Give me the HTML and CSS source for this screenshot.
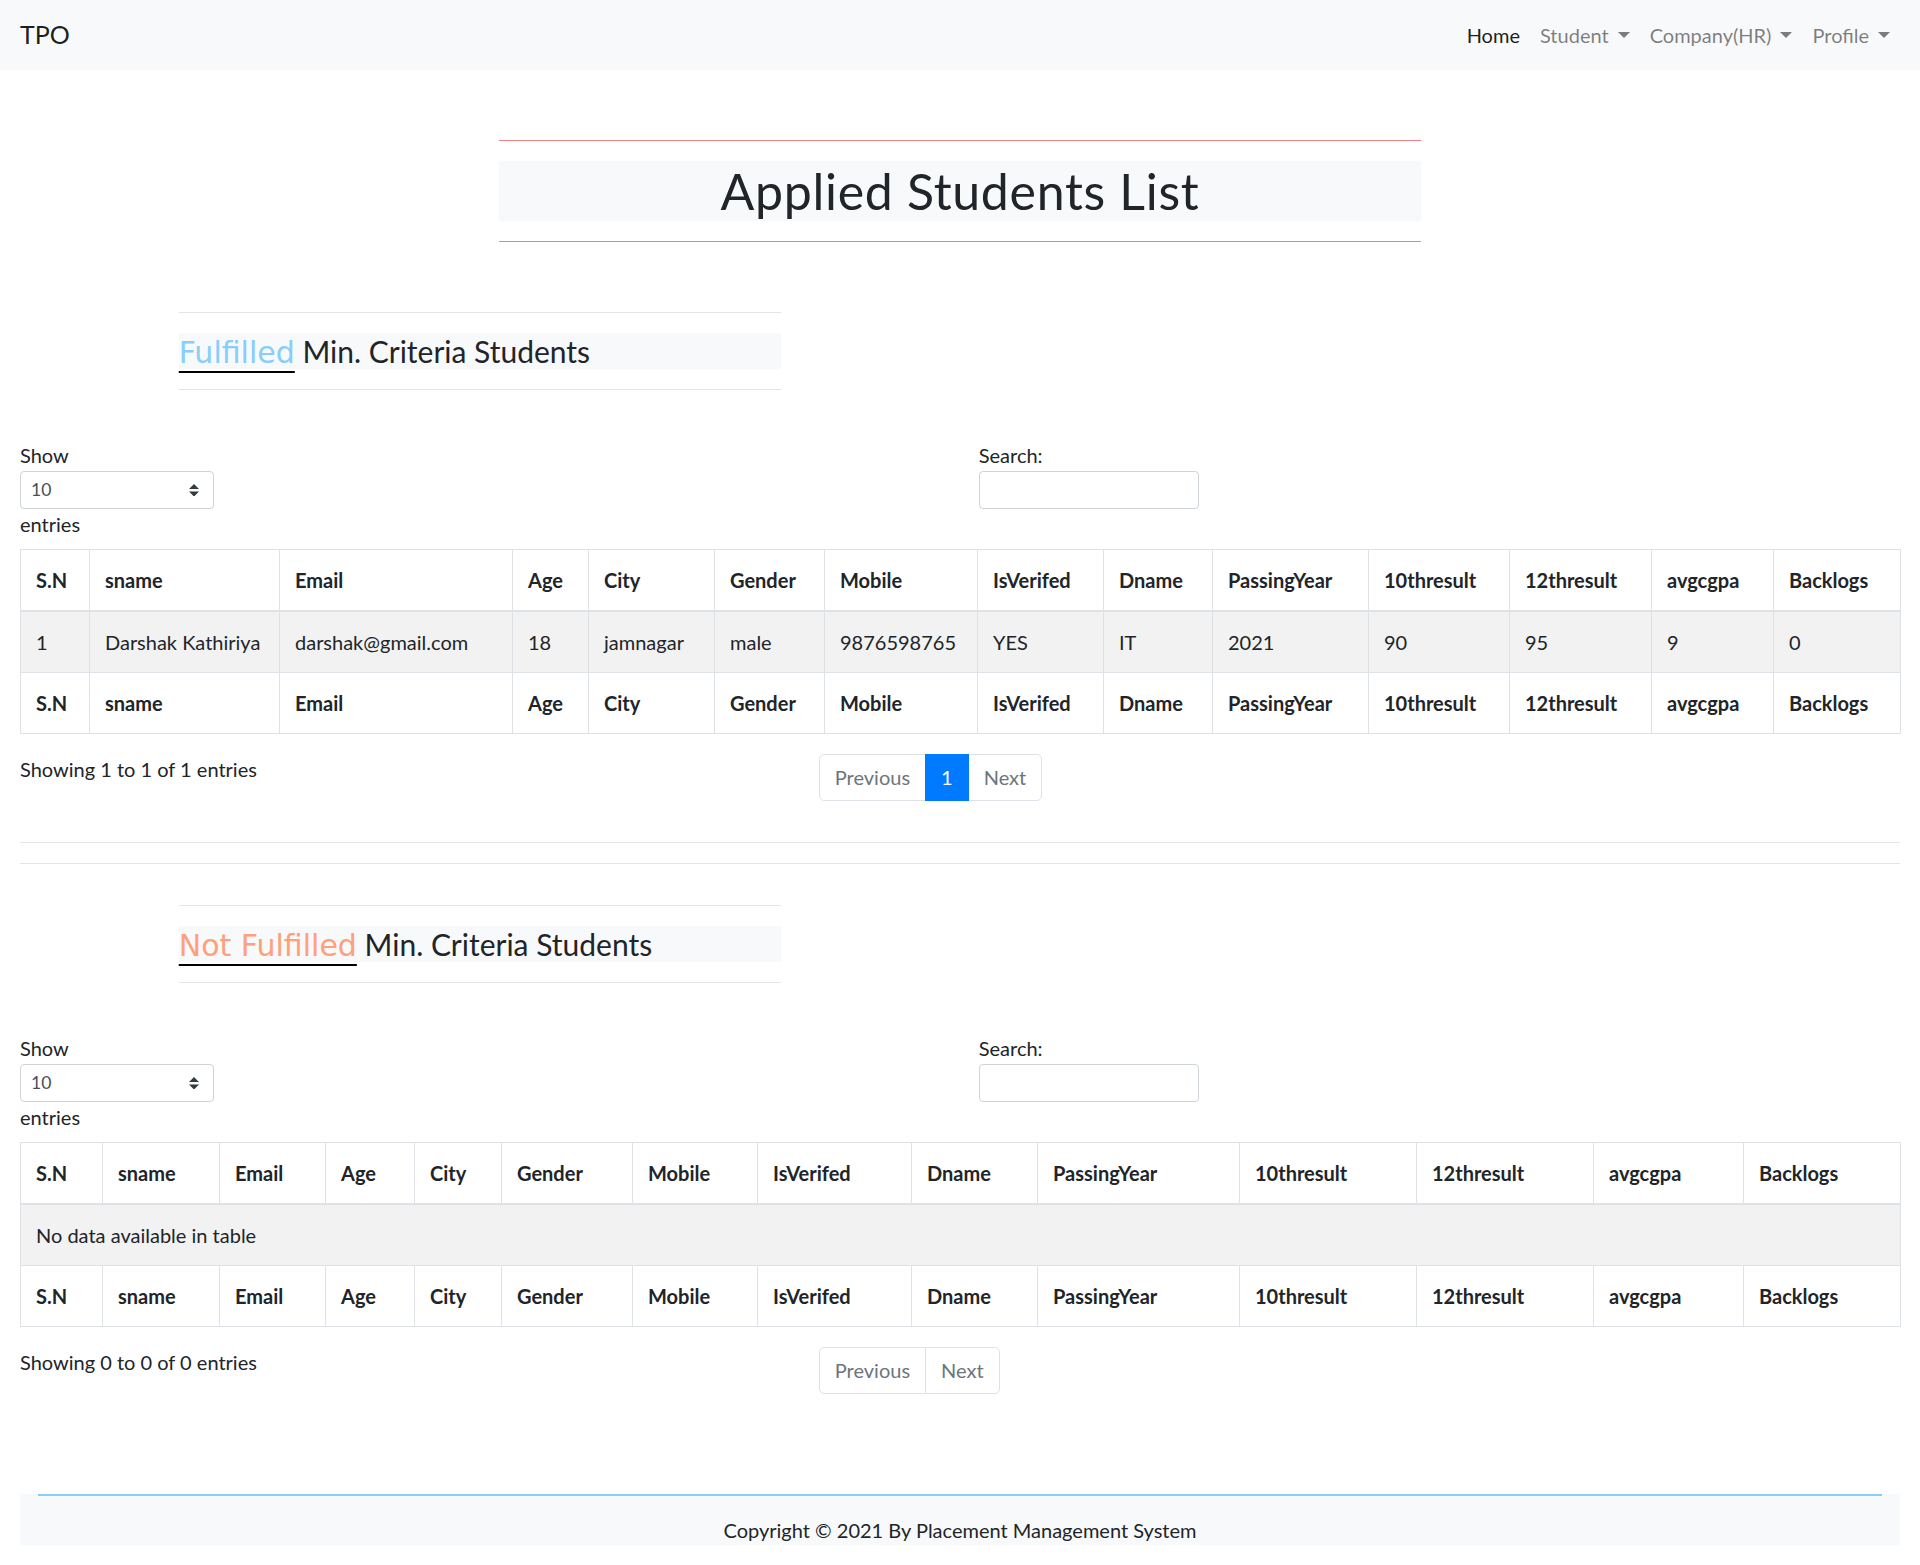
FILE: index.html
```html
<!DOCTYPE html>
<html lang="en">
<head>
<meta charset="utf-8">
<title>Applied Students List</title>
<link rel="stylesheet" href="styles.css">
</head>
<body>
<nav class="navbar">
  <a class="brand" href="#">TPO</a>
  <ul class="nav">
    <li><a class="nav-link active" href="#">Home</a></li>
    <li><a class="nav-link" href="#">Student<span class="caret"></span></a></li>
    <li><a class="nav-link" href="#">Company(HR)<span class="caret"></span></a></li>
    <li><a class="nav-link" href="#">Profile<span class="caret"></span></a></li>
  </ul>
</nav>

<main class="page">
  <section class="title-wrap">
    <hr class="rule-red">
    <h1 class="page-title">Applied Students List</h1>
    <hr class="rule-red rule-red-bottom">
  </section>

  <section class="sub-wrap">
    <hr class="rule">
    <h4 class="sub-title"><u class="crit"><span class="crit-ok">Fulfilled</span></u> Min. Criteria Students</h4>
    <hr class="rule">
  </section>

  <div class="dt-top">
    <div class="dt-length">
      <span class="dt-label">Show</span>
      <div class="select-box"><span>10</span>
        <svg class="sel-arrows" width="10" height="12.5" viewBox="0 0 4 5"><path fill="#343a40" d="M2 0L0 2h4zm0 5L0 3h4z"/></svg>
      </div>
      <span class="dt-label">entries</span>
    </div>
    <div class="dt-filter">
      <span class="dt-label">Search:</span>
      <div class="search-input"></div>
    </div>
  </div>

  <table class="dt-table tbl-a">
    <colgroup>
      <col><col><col><col><col><col><col><col><col><col><col><col><col><col>
    </colgroup>
    <thead>
      <tr><th>S.N</th><th>sname</th><th>Email</th><th>Age</th><th>City</th><th>Gender</th><th>Mobile</th><th>IsVerifed</th><th>Dname</th><th>PassingYear</th><th>10thresult</th><th>12thresult</th><th>avgcgpa</th><th>Backlogs</th></tr>
    </thead>
    <tbody>
      <tr><td>1</td><td>Darshak Kathiriya</td><td>darshak@gmail.com</td><td>18</td><td>jamnagar</td><td>male</td><td>9876598765</td><td>YES</td><td>IT</td><td>2021</td><td>90</td><td>95</td><td>9</td><td>0</td></tr>
    </tbody>
    <tfoot>
      <tr><th>S.N</th><th>sname</th><th>Email</th><th>Age</th><th>City</th><th>Gender</th><th>Mobile</th><th>IsVerifed</th><th>Dname</th><th>PassingYear</th><th>10thresult</th><th>12thresult</th><th>avgcgpa</th><th>Backlogs</th></tr>
    </tfoot>
  </table>

  <div class="dt-bottom">
    <div class="dt-info">Showing 1 to 1 of 1 entries</div>
    <ul class="pagination">
      <li class="page-item disabled"><a class="page-link" href="#">Previous</a></li>
      <li class="page-item active"><a class="page-link" href="#">1</a></li>
      <li class="page-item disabled"><a class="page-link" href="#">Next</a></li>
    </ul>
  </div>

  <hr class="rule rule-full">
  <hr class="rule rule-full">

  <section class="sub-wrap sub-wrap-second">
    <hr class="rule">
    <h4 class="sub-title"><u class="crit"><span class="crit-not">Not Fulfilled</span></u> Min. Criteria Students</h4>
    <hr class="rule">
  </section>

  <div class="dt-top">
    <div class="dt-length">
      <span class="dt-label">Show</span>
      <div class="select-box"><span>10</span>
        <svg class="sel-arrows" width="10" height="12.5" viewBox="0 0 4 5"><path fill="#343a40" d="M2 0L0 2h4zm0 5L0 3h4z"/></svg>
      </div>
      <span class="dt-label">entries</span>
    </div>
    <div class="dt-filter">
      <span class="dt-label">Search:</span>
      <div class="search-input"></div>
    </div>
  </div>

  <table class="dt-table tbl-b">
    <colgroup>
      <col><col><col><col><col><col><col><col><col><col><col><col><col><col>
    </colgroup>
    <thead>
      <tr><th>S.N</th><th>sname</th><th>Email</th><th>Age</th><th>City</th><th>Gender</th><th>Mobile</th><th>IsVerifed</th><th>Dname</th><th>PassingYear</th><th>10thresult</th><th>12thresult</th><th>avgcgpa</th><th>Backlogs</th></tr>
    </thead>
    <tbody>
      <tr><td class="empty" colspan="14">No data available in table</td></tr>
    </tbody>
    <tfoot>
      <tr><th>S.N</th><th>sname</th><th>Email</th><th>Age</th><th>City</th><th>Gender</th><th>Mobile</th><th>IsVerifed</th><th>Dname</th><th>PassingYear</th><th>10thresult</th><th>12thresult</th><th>avgcgpa</th><th>Backlogs</th></tr>
    </tfoot>
  </table>

  <div class="dt-bottom">
    <div class="dt-info">Showing 0 to 0 of 0 entries</div>
    <ul class="pagination">
      <li class="page-item disabled"><a class="page-link" href="#">Previous</a></li>
      <li class="page-item disabled"><a class="page-link" href="#">Next</a></li>
    </ul>
  </div>

  <footer class="footer">
    <hr class="footer-rule">
    <p class="copyright">Copyright © 2021 By Placement Management System</p>
  </footer>
</main>
</body>
</html>
```
FILE: styles.css
```css
* { box-sizing: border-box; }
html, body { margin: 0; padding: 0; }
body {
  font-family: Lato, "Open Sans", sans-serif;
  font-size: 20px;
  line-height: 30px;
  color: #212529;
  background: #fff;
}

/* navbar */
.navbar {
  height: 70px;
  background: #f8f9fa;
  display: flex;
  align-items: center;
  justify-content: space-between;
  padding: 0 20px;
}
.brand {
  font-size: 25px;
  line-height: 37.5px;
  color: rgba(0,0,0,.9);
  text-decoration: none;
}
.nav { display: flex; list-style: none; margin: 0; padding: 0; }
.nav-link {
  display: block;
  padding: 10px;
  color: rgba(0,0,0,.5);
  text-decoration: none;
}
.nav-link.active { color: rgba(0,0,0,.9); }
.caret {
  display: inline-block;
  margin-left: 9px;
  vertical-align: 5px;
  border-top: 6px solid;
  border-left: 6px solid transparent;
  border-right: 6px solid transparent;
}

/* page */
.page { padding: 0 20px; }

.title-wrap { margin-left: 478.75px; width: 922.5px; padding-top: 70px; }
.rule-red { margin: 0; border: 0; border-top: 1px solid #f08080; height: 0; }
.rule-red-bottom { margin-top: 20px; }
.page-title {
  margin: 20px 0 0;
  font-size: 50px;
  line-height: 60px;
  font-weight: 400;
  letter-spacing: .7px;
  text-align: center;
  background: #f8f9fa;
}

.sub-wrap { margin-left: 158.75px; width: 602.5px; padding-top: 70px; }
.sub-wrap-second { padding-top: 41px; }
.rule { margin: 0; border: 0; border-top: 1px solid rgba(0,0,0,.1); height: 0; }
.sub-title {
  margin: 20px 0;
  height: 36px;
  font-size: 30px;
  line-height: 36px;
  font-weight: 400;
  background: #f8f9fa;
}
.crit {
  font-family: "Comic Sans MS", "DejaVu Sans", sans-serif;
  line-height: 0;
  color: #000;
  text-decoration: underline;
  text-decoration-thickness: 2px;
  text-underline-offset: 8px;
}
.crit-ok { color: #87cefa; }
.crit-not { color: #ffa07a; }

/* datatable controls */
.dt-top { display: flex; padding-top: 50px; }
.dt-length { width: 958.75px; }
.dt-filter { flex: 1; }
.dt-label { display: block; }
.select-box {
  margin-top: 1px;
  width: 194px;
  height: 38px;
  border: 1px solid #ced4da;
  border-radius: 4px;
  display: flex;
  align-items: center;
  justify-content: space-between;
  padding: 0 14px 0 10px;
  font-size: 17.5px;
  color: #495057;
}
.search-input {
  margin-top: 1px;
  width: 220px;
  height: 38px;
  border: 1px solid #ced4da;
  border-radius: 4px;
}

/* tables */
.dt-table {
  width: 1880px;
  table-layout: fixed;
  border-collapse: collapse;
  margin-top: 10px;
}
.dt-table th, .dt-table td {
  padding: 15px;
  border: 1px solid #dee2e6;
  text-align: left;
  vertical-align: top;
  line-height: 30px;
  white-space: nowrap;
  overflow: hidden;
}
.dt-table thead th { border-bottom-width: 2px; }
.dt-table th { font-weight: 700; }
.dt-table tbody tr { background: #f2f2f2; }

.tbl-a col:nth-child(1) { width: 69px; }
.tbl-a col:nth-child(2) { width: 190px; }
.tbl-a col:nth-child(3) { width: 233px; }
.tbl-a col:nth-child(4) { width: 76px; }
.tbl-a col:nth-child(5) { width: 126px; }
.tbl-a col:nth-child(6) { width: 110px; }
.tbl-a col:nth-child(7) { width: 153px; }
.tbl-a col:nth-child(8) { width: 126px; }
.tbl-a col:nth-child(9) { width: 109px; }
.tbl-a col:nth-child(10) { width: 156px; }
.tbl-a col:nth-child(11) { width: 141px; }
.tbl-a col:nth-child(12) { width: 142px; }
.tbl-a col:nth-child(13) { width: 122px; }
.tbl-a col:nth-child(14) { width: 127px; }

.tbl-b col:nth-child(1) { width: 82px; }
.tbl-b col:nth-child(2) { width: 117px; }
.tbl-b col:nth-child(3) { width: 106px; }
.tbl-b col:nth-child(4) { width: 89px; }
.tbl-b col:nth-child(5) { width: 87px; }
.tbl-b col:nth-child(6) { width: 131px; }
.tbl-b col:nth-child(7) { width: 125px; }
.tbl-b col:nth-child(8) { width: 154px; }
.tbl-b col:nth-child(9) { width: 126px; }
.tbl-b col:nth-child(10) { width: 202px; }
.tbl-b col:nth-child(11) { width: 177px; }
.tbl-b col:nth-child(12) { width: 177px; }
.tbl-b col:nth-child(13) { width: 150px; }
.tbl-b col:nth-child(14) { width: 157px; }

/* info + pagination */
.dt-bottom { display: flex; align-items: flex-start; margin-top: 20px; }
.dt-info { width: 798.75px; }
.pagination { display: flex; list-style: none; margin: 0; padding: 0; }
.page-link {
  display: block;
  padding: 10px 15px;
  line-height: 25px;
  border: 1px solid #dee2e6;
  margin-left: -1px;
  color: #6c757d;
  background: #fff;
  text-decoration: none;
}
.page-item:first-child .page-link { margin-left: 0; border-radius: 5px 0 0 5px; }
.page-item:last-child .page-link { border-radius: 0 5px 5px 0; }
.page-item.active .page-link {
  position: relative;
  z-index: 1;
  background: #007bff;
  border-color: #007bff;
  color: #fff;
}

.rule-full { margin-top: 41px; }
.rule-full + .rule-full { margin-top: 20px; }

/* footer */
.footer { margin-top: 100px; margin-bottom: 20px; background: #f8f9fa; }
.footer-rule { margin: 0 18px; border: 0; border-top: 2px solid #87cefa; height: 0; }
.copyright { margin: 19px 0 0; text-align: center; line-height: 30px; }
```
